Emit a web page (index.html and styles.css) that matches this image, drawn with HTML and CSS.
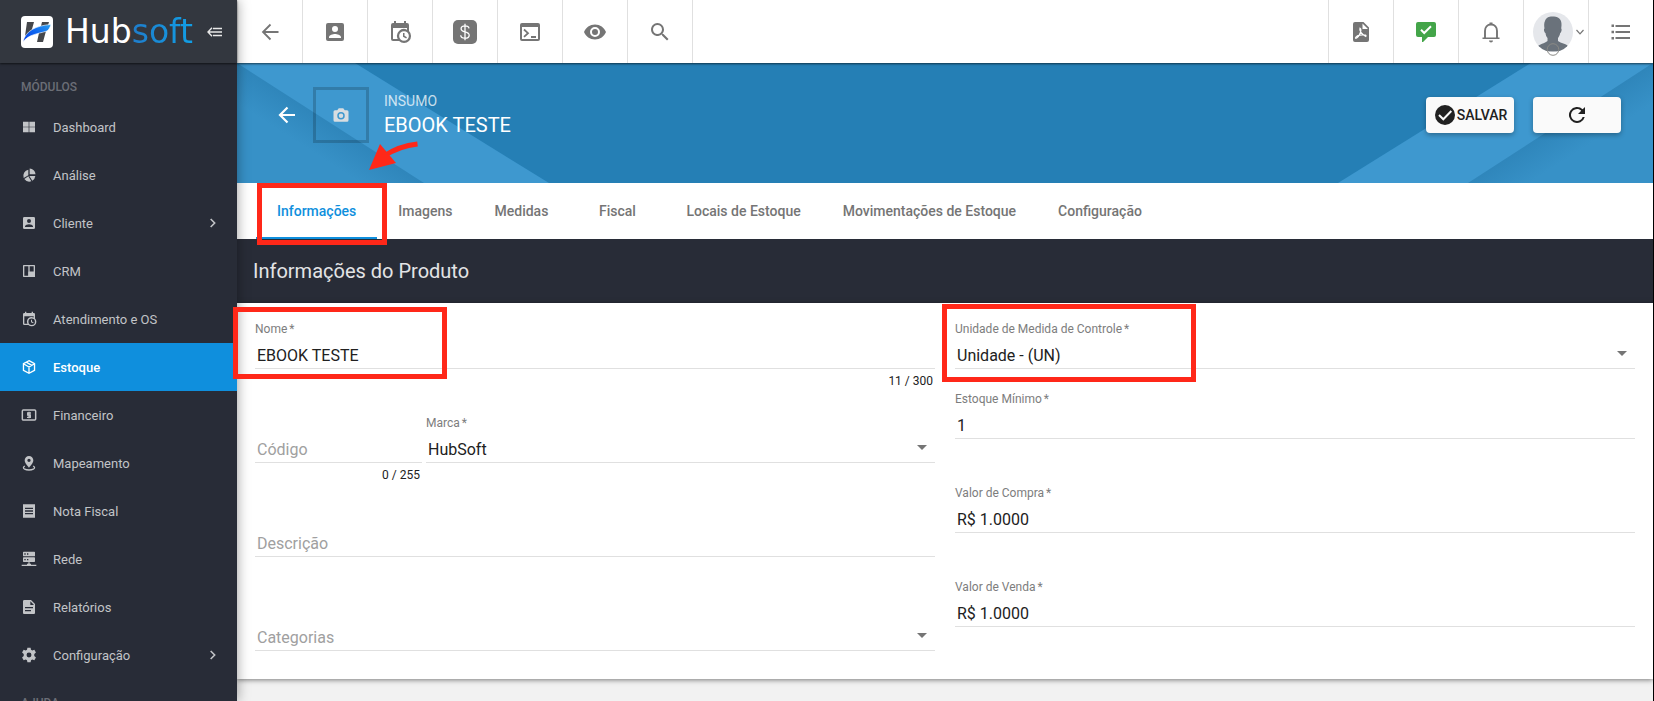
FILE: index.html
```html
<!DOCTYPE html>
<html lang="pt-BR">
<head>
<meta charset="utf-8">
<meta name="viewport" content="width=device-width, initial-scale=1">
<title>Hubsoft - Insumo</title>
<link rel="stylesheet" href="styles.css">
</head>
<body>
<div class="shell">
  <aside class="sidebar">
    <div class="brand">
      <svg class="brand-mark" viewBox="0 0 32 32" aria-hidden="true">
        <defs><linearGradient id="swoosh" x1="0" y1="1" x2="1" y2="0"><stop offset="0" stop-color="#0a3fe0"/><stop offset=".5" stop-color="#0d63f0"/><stop offset="1" stop-color="#2aa0ee"/></linearGradient></defs>
        <rect width="32" height="32" rx="4" fill="#fff"/>
        <path d="M6 6h7l-2.500 9-6.500 5zM21 6h7l-1.500 5-7 1zM18 17l7-2-3 11h-6z" fill="#45474b"/>
        <path d="M2 26C4 15 15 9.500 30 8.500c-1 3-2 5-4 6.500C17 18 8 18 2 26z" fill="url(#swoosh)" stroke="#fff" stroke-width=".6"/>
      </svg>
      <span class="brand-name">Hub<span class="brand-soft">soft</span></span>
      <button class="fold" type="button" aria-label="Recolher menu">
        <svg viewBox="0 0 16 10" class="fold-icon"><path d="M5 .7 1 5l4 4.300M1 5h14M6 1.500h9M6 8.500h9" fill="none" stroke="currentColor" stroke-width="1.400"/></svg>
      </button>
    </div>
    <nav class="menu" aria-label="Módulos">
      <h2 class="menu-title">MÓDULOS</h2>
      <a class="menu-item" href="#"><svg class="mi" viewBox="0 0 24 24"><path d="M3 4h8.500v7.500H3zM12.500 4H21v7.500h-8.500zM3 12.500h8.500V20H3zM12.500 12.500H21V20h-8.500z"/></svg><span>Dashboard</span></a>
      <a class="menu-item" href="#"><svg class="mi" viewBox="0 0 24 24"><path d="M13 2.100A9.500 9.500 0 0 1 21.800 11L13 11zM11 4v8.200L4 16.500A9.500 9.500 0 0 1 11 4zM12.500 13.500l9 0a9.500 9.500 0 0 1-4.500 7zM11 14l4.500 7.500A9.500 9.500 0 0 1 5 18z"/></svg><span>Análise</span></a>
      <a class="menu-item" href="#"><svg class="mi" viewBox="0 0 24 24"><path d="M6 17c0-2 4-3.100 6-3.100s6 1.100 6 3.100v1H6M15 9a3 3 0 1 1-6 0 3 3 0 0 1 6 0M3 5v14a2 2 0 0 0 2 2h14a2 2 0 0 0 2-2V5a2 2 0 0 0-2-2H5a2 2 0 0 0-2 2Z" fill-rule="evenodd"/></svg><span>Cliente</span><svg class="chev" viewBox="0 0 24 24"><path d="M8.500 6l6 6-6 6" fill="none" stroke="currentColor" stroke-width="2.400"/></svg></a>
      <a class="menu-item" href="#"><svg class="mi" viewBox="0 0 24 24"><path d="M4 3h16a1 1 0 0 1 1 1v16a1 1 0 0 1-1 1H4a1 1 0 0 1-1-1V4a1 1 0 0 1 1-1zm1 2v14h6V5zm8 0v8h6V5z" fill-rule="evenodd"/><path d="M11 13h10v8H11z"/></svg><span>CRM</span></a>
      <a class="menu-item" href="#"><svg class="mi" viewBox="0 0 24 24"><path d="M15 13h1.500v2.820l2.440 1.410-.75 1.300L15 16.690V13m4-5H5v11h4.670A7 7 0 0 1 19 9.670V8M5 21a2 2 0 0 1-2-2V5a2 2 0 0 1 2-2h1V1h2v2h8V1h2v2h1a2 2 0 0 1 2 2v6.100A7 7 0 0 1 11.100 21H5m11-9.850a4.850 4.850 0 1 0 0 9.700 4.850 4.850 0 0 0 0-9.700Z"/></svg><span>Atendimento e OS</span></a>
      <a class="menu-item is-active" href="#" aria-current="page"><svg class="mi" viewBox="0 0 24 24"><path d="M12 2.500l8.300 4.600v9.800L12 21.500l-8.300-4.600V7.100zM3.700 7.100 12 12l8.300-4.900M12 12v9.500M7.800 4.800l8.400 4.800" fill="none" stroke="currentColor" stroke-width="2"/></svg><span>Estoque</span></a>
      <a class="menu-item" href="#"><svg class="mi" viewBox="0 0 24 24"><rect x="2" y="4.500" width="20" height="15" rx="1.500" fill="none" stroke="currentColor" stroke-width="2.200"/><path d="M15 9h-5v3h4v3.500H9M12 7v10" fill="none" stroke="currentColor" stroke-width="1.900"/></svg><span>Financeiro</span></a>
      <a class="menu-item" href="#"><svg class="mi" viewBox="0 0 24 24"><path d="M12 1.500a6.500 6.500 0 0 1 6.500 6.500c0 4.500-6.500 11-6.500 11S5.500 12.500 5.500 8A6.500 6.500 0 0 1 12 1.500m0 4a2.500 2.500 0 1 0 0 5 2.500 2.500 0 0 0 0-5z" fill-rule="evenodd"/><path d="M5.800 16.500C3 18 3 20 5.500 21.200c3 1.700 10 1.700 13 0C21 20 21 18 18.200 16.500" fill="none" stroke="currentColor" stroke-width="2"/></svg><span>Mapeamento</span></a>
      <a class="menu-item" href="#"><svg class="mi" viewBox="0 0 24 24"><path d="M3 2h18v20H3zm3 5v2h12V7zm0 4v2h12v-2zm0 4v2h12v-2z" fill-rule="evenodd"/></svg><span>Nota Fiscal</span></a>
      <a class="menu-item" href="#"><svg class="mi" viewBox="0 0 24 24"><path d="M4 1h16a1 1 0 0 1 1 1v5a1 1 0 0 1-1 1H4a1 1 0 0 1-1-1V2a1 1 0 0 1 1-1m1 2.500v2h2v-2zm4 0v2h2v-2zM4 9.500h16a1 1 0 0 1 1 1v5a1 1 0 0 1-1 1H4a1 1 0 0 1-1-1v-5a1 1 0 0 1 1-1M5 12v2h2v-2zm4 0v2h2v-2zM11 17h2v2h2v1.500h8v2H1v-2h8V19h2z" fill-rule="evenodd"/></svg><span>Rede</span></a>
      <a class="menu-item" href="#"><svg class="mi" viewBox="0 0 24 24"><path d="M5 1.500h10l6 6V21a1.500 1.500 0 0 1-1.500 1.500h-15A1.500 1.500 0 0 1 3 21V3.500a2 2 0 0 1 2-2M14 3.500V9h5.500zM6 12v2h12v-2zm0 4.500v2h9v-2z" fill-rule="evenodd"/></svg><span>Relatórios</span></a>
      <a class="menu-item" href="#"><svg class="mi" viewBox="0 0 24 24"><path d="M9.600 1h4.800l.6 3.200 1.900 1.100 3.100-1.100 2.400 4.200-2.500 2.100v2.900l2.500 2.200-2.400 4.200-3.100-1.100-1.900 1.100-.6 3.200H9.600L9 19.800l-1.900-1.100L4 19.800l-2.400-4.200 2.500-2.200v-2.900L1.600 8.400 4 4.200l3.100 1.100L9 4.200zM12 8.300a3.700 3.700 0 1 0 0 7.400 3.700 3.700 0 0 0 0-7.400z" fill-rule="evenodd"/></svg><span>Configuração</span><svg class="chev" viewBox="0 0 24 24"><path d="M8.500 6l6 6-6 6" fill="none" stroke="currentColor" stroke-width="2.400"/></svg></a>
      <h2 class="menu-title">AJUDA</h2>
    </nav>
  </aside>

  <main class="main">
    <header class="topbar">
      <div class="tools tools-start">
        <button class="tool" type="button" aria-label="Voltar"><svg class="ti" viewBox="0 0 24 24"><path d="M12.500 4.500 5 12l7.500 7.500M5 12h15.500" fill="none" stroke="currentColor" stroke-width="1.800"/></svg></button>
        <button class="tool" type="button" aria-label="Clientes"><svg class="ti" viewBox="0 0 24 24"><path d="M6 17c0-2 4-3.100 6-3.100s6 1.100 6 3.100v1H6M15 9a3 3 0 1 1-6 0 3 3 0 0 1 6 0M3 5v14a2 2 0 0 0 2 2h14a2 2 0 0 0 2-2V5a2 2 0 0 0-2-2H5a2 2 0 0 0-2 2Z" fill-rule="evenodd"/></svg></button>
        <button class="tool" type="button" aria-label="Agenda"><svg class="ti" viewBox="0 0 24 24"><path d="M15 13h1.500v2.820l2.440 1.410-.75 1.300L15 16.690V13m4-5H5v11h4.670A7 7 0 0 1 19 9.670V8M5 21a2 2 0 0 1-2-2V5a2 2 0 0 1 2-2h1V1h2v2h8V1h2v2h1a2 2 0 0 1 2 2v6.100A7 7 0 0 1 11.100 21H5m11-9.850a4.850 4.850 0 1 0 0 9.700 4.850 4.850 0 0 0 0-9.700Z"/></svg></button>
        <button class="tool" type="button" aria-label="Financeiro"><svg class="ti" viewBox="0 0 24 24"><rect width="24" height="24" rx="5"/><path d="M16 8.300C15.800 6.600 14.200 5.800 12 5.800c-2.300 0-3.900 1.100-3.900 2.900 0 4.300 8.100 2.100 8.100 6.500 0 1.900-1.800 3-4.200 3-2.500 0-4.200-1-4.300-2.900M12 3.800v16.400" fill="none" stroke="#fff" stroke-width="1.300"/></svg></button>
        <button class="tool" type="button" aria-label="Terminal"><svg class="ti" viewBox="0 0 24 24"><path d="M4 3h16a2 2 0 0 1 2 2v14a2 2 0 0 1-2 2H4a2 2 0 0 1-2-2V5a2 2 0 0 1 2-2m0 4v12h16V7z" fill-rule="evenodd"/><path d="M6 9.500l4 3.700-4 3.700M13 17h5" fill="none" stroke="currentColor" stroke-width="1.800"/></svg></button>
        <button class="tool" type="button" aria-label="Visualizar"><svg class="ti" viewBox="0 0 24 24"><path d="M12 9a3 3 0 1 0 0 6 3 3 0 0 0 0-6m0 8a5 5 0 1 1 0-10 5 5 0 0 1 0 10m0-12.500C7 4.500 2.730 7.610 1 12c1.730 4.390 6 7.500 11 7.500s9.270-3.110 11-7.500c-1.730-4.390-6-7.500-11-7.500Z" fill-rule="evenodd"/></svg></button>
        <button class="tool" type="button" aria-label="Buscar"><svg class="ti" viewBox="0 0 24 24"><path d="M9.500 3A6.500 6.500 0 0 1 16 9.500c0 1.610-.59 3.090-1.560 4.230l.27.270h.79l5 5-1.500 1.500-5-5v-.79l-.27-.27A6.500 6.500 0 1 1 9.500 3m0 2a4.500 4.500 0 1 0 0 9 4.500 4.500 0 0 0 0-9Z" fill-rule="evenodd"/></svg></button>
      </div>
      <div class="tools tools-end">
        <button class="tool" type="button" aria-label="PDF"><svg class="ti" viewBox="0 0 24 24"><path d="M6 2h8.500L20 7.500V20a2 2 0 0 1-2 2H6a2 2 0 0 1-2-2V4a2 2 0 0 1 2-2m7.500 1.500V9H19z" fill-rule="evenodd"/><path d="M11 8.200c-1 2.500 1.500 6 5.800 8.200.8-1.300-1-1.800-3.300-1.600-3.300.1-6.500 1.200-7 3.200.5 1 2.700-.8 4-3.500 1.200-2.300 2-5.200.5-6.300z" fill="none" stroke="#fff" stroke-width="1.200"/></svg></button>
        <button class="tool" type="button" aria-label="Mensagens"><svg class="ti ok" viewBox="0 0 24 24"><path d="M4 2h16a2 2 0 0 1 2 2v11a2 2 0 0 1-2 2h-6l-5 5H8v-5H4a2 2 0 0 1-2-2V4a2 2 0 0 1 2-2z"/><path d="M7 9.800l3.200 3.200L17 6.300" fill="none" stroke="#fff" stroke-width="2"/></svg></button>
        <button class="tool" type="button" aria-label="Notificações"><svg class="ti" viewBox="0 0 24 24"><path d="M6 18v-7c0-3.500 2.200-6.500 6-6.500s6 3 6 6.500v7" fill="none" stroke="currentColor" stroke-width="1.900"/><path d="M3.500 17.500h17v1.600h-17zM10.500 2.500h3v2.500h-3zM10 20.500h4a2 2 0 0 1-4 0"/></svg></button>
        <button class="tool profile" type="button" aria-label="Perfil">
          <svg class="avatar" viewBox="0 0 40 44"><defs><clipPath id="face"><circle cx="20" cy="20" r="20"/></clipPath></defs><circle cx="20" cy="20" r="20" fill="#e5e7eb"/><path clip-path="url(#face)" d="M12 9c1-4 5-5 9-4.500 5 .5 8 3 7.500 9l-.3 3c.8 0 .5 4-1 4.500-.4 2.500-1.500 4-2.200 5v3c3 2.500 8 2.500 10 5v6H4v-5c2-3 8-3.500 10.500-6v-3c-1-1-1.800-3-2-5-1.500-.5-2-4.500-1-4.500-.5-3-.5-5.500.5-7.500z" fill="#6a727b"/><path d="M14.500 39.500a6 6 0 0 0 11 0z" fill="#fff"/><circle cx="20" cy="37.500" r="5.800" fill="none" stroke="#8a8a86"/></svg>
          <svg class="caret" viewBox="0 0 10 10"><path d="M1.500 3 5 6.800 8.500 3" fill="none" stroke="currentColor" stroke-width="1.200"/></svg>
        </button>
        <button class="tool" type="button" aria-label="Lista"><svg class="ti" viewBox="0 0 24 24"><path d="M6.500 5H21v2H6.500zM6.500 11H21v2H6.500zM6.500 17H21v2H6.500zM2.500 4.500h2.500V7H2.500zM2.500 10.700h2.500v2.500H2.500zM2.500 17h2.500v2.500H2.500z"/></svg></button>
      </div>
    </header>

    <section class="banner">
      <svg class="stripes stripes-left" viewBox="0 0 320 120" aria-hidden="true">
        <defs><linearGradient id="fold-a" gradientUnits="userSpaceOnUse" x1="92" y1="60" x2="74" y2="88"><stop offset="0" stop-color="#2f86bb"/><stop offset="1" stop-color="#3791c7"/></linearGradient></defs>
        <path d="M0 0h118l194 120H0z" fill="#3e98cf"/><path d="M0 0l187 120H0z" fill="url(#fold-a)"/>
      </svg>
      <svg class="stripes stripes-right" viewBox="0 0 320 120" aria-hidden="true">
        <defs><linearGradient id="fold-b" gradientUnits="userSpaceOnUse" x1="228" y1="60" x2="246" y2="88"><stop offset="0" stop-color="#2f86bb"/><stop offset="1" stop-color="#3791c7"/></linearGradient></defs>
        <path d="M320 0H198L5 120h315z" fill="#3e98cf"/><path d="M320 0L135 120h185z" fill="url(#fold-b)"/>
      </svg>
      <div class="heading">
        <button class="back" type="button" aria-label="Voltar"><svg class="ti" viewBox="0 0 24 24"><path d="M12.500 4.500 5 12l7.500 7.500M5 12h15" fill="none" stroke="currentColor" stroke-width="2.200"/></svg></button>
        <div class="photo"><svg class="camera" viewBox="0 0 24 24"><path d="M9 3h6l2 2.500h3a2 2 0 0 1 2 2V19a2 2 0 0 1-2 2H4a2 2 0 0 1-2-2V7.500a2 2 0 0 1 2-2h3zM12 8a5 5 0 1 0 0 10 5 5 0 0 0 0-10m0 2a3 3 0 1 1 0 6 3 3 0 0 1 0-6z" fill-rule="evenodd"/></svg></div>
        <div class="titles"><span class="kind">INSUMO</span><h1 class="name">EBOOK TESTE</h1></div>
      </div>
      <div class="actions">
        <button class="action" type="button"><svg class="ti" viewBox="0 0 24 24"><circle cx="12" cy="12" r="10"/><path d="M6 12l4.300 4.300L18.300 8" fill="none" stroke="#fafafa" stroke-width="2"/></svg><span>SALVAR</span></button>
        <button class="action" type="button" aria-label="Atualizar"><svg class="ti" viewBox="0 0 24 24"><path d="M17.650 6.350A8 8 0 1 0 19.730 14h-2.080A6 6 0 1 1 12 6c1.660 0 3.140.69 4.220 1.780L13 11h7V4l-2.350 2.350Z"/></svg></button>
      </div>
    </section>

    <nav class="tabs" aria-label="Seções">
      <a class="tab is-current" href="#">Informações
        <span class="mark mark-tab"></span>
        <svg class="pointer" viewBox="0 0 50 30" aria-hidden="true"><path d="M48.500 3Q30 5 15 15" fill="none" stroke="#ff2819" stroke-width="5"/><path d="M0 29 11 3l16 19z" fill="#ff2819"/></svg>
      </a>
      <a class="tab" href="#">Imagens</a>
      <a class="tab" href="#">Medidas</a>
      <a class="tab" href="#">Fiscal</a>
      <a class="tab" href="#">Locais de Estoque</a>
      <a class="tab" href="#">Movimentações de Estoque</a>
      <a class="tab" href="#">Configuração</a>
    </nav>

    <h2 class="section-title">Informações do Produto</h2>

    <form class="card">
      <div class="column">
        <div class="field roomy">
          <label class="label" for="nome">Nome<span class="req">*</span></label>
          <input class="control" id="nome" type="text" value="EBOOK TESTE">
          <span class="counter">11 / 300</span>
          <span class="mark mark-name"></span>
        </div>
        <div class="pair roomy">
          <div class="field">
            <span class="label"></span>
            <input class="control" type="text" placeholder="Código" aria-label="Código">
            <span class="counter">0 / 255</span>
          </div>
          <div class="field">
            <label class="label" for="marca">Marca<span class="req">*</span></label>
            <div class="drop"><select class="control" id="marca"><option>HubSoft</option></select></div>
          </div>
        </div>
        <div class="field roomy">
          <span class="label"></span>
          <input class="control" type="text" placeholder="Descrição" aria-label="Descrição">
        </div>
        <div class="field">
          <span class="label"></span>
          <div class="drop"><select class="control is-empty" aria-label="Categorias"><option>Categorias</option></select></div>
        </div>
      </div>
      <div class="column">
        <div class="field">
          <label class="label" for="unidade">Unidade de Medida de Controle<span class="req">*</span></label>
          <div class="drop"><select class="control" id="unidade"><option>Unidade - (UN)</option></select></div>
          <span class="mark mark-unit"></span>
        </div>
        <div class="field roomy">
          <label class="label" for="minimo">Estoque Mínimo<span class="req">*</span></label>
          <input class="control" id="minimo" type="text" value="1">
        </div>
        <div class="field roomy">
          <label class="label" for="compra">Valor de Compra<span class="req">*</span></label>
          <input class="control" id="compra" type="text" value="R$ 1.0000">
        </div>
        <div class="field">
          <label class="label" for="venda">Valor de Venda<span class="req">*</span></label>
          <input class="control" id="venda" type="text" value="R$ 1.0000">
        </div>
      </div>
    </form>
  </main>
</div>
</body>
</html>
```
FILE: styles.css
```css
* { box-sizing: border-box; }

body {
  margin: 0;
  font-family: Roboto, "Liberation Sans", sans-serif;
  font-size: 14px;
  color: #212121;
  background: #f2f2f2;
}

button { font: inherit; border: 0; padding: 0; background: none; cursor: pointer; }
a { color: inherit; text-decoration: none; }
svg { display: block; fill: currentColor; flex: none; }

.shell { display: flex; height: 100vh; }

/* Sidebar */
.sidebar {
  position: relative;
  z-index: 2;
  flex: 0 0 237px;
  display: flex;
  flex-direction: column;
  background: #282c37;
  color: #c2c4c7;
  box-shadow: 0 0 12px rgba(0, 0, 0, .4);
}
.brand {
  position: relative;
  z-index: 1;
  flex: none;
  display: flex;
  align-items: center;
  height: 63px;
  padding: 0 14px 0 21px;
  background: #33373f;
  box-shadow: 0 1px 2px rgba(0, 0, 0, .6);
}
.brand-mark { width: 32px; height: 32px; }
.brand-name {
  flex: 1;
  margin-left: 12px;
  font: 33px/32px "DejaVu Sans", sans-serif;
  color: #fff;
}
.brand-soft {
  background: linear-gradient(90deg, #1f7dcc, #119fe6);
  background-clip: text;
  color: transparent;
}
.fold { color: #e8e8e8; }
.fold-icon { width: 16px; height: 10px; }

.menu { flex: 1; min-height: 0; overflow-y: auto; scrollbar-width: none; }
.menu-title {
  margin: 0;
  padding: 16px 21px 8px;
  font-size: 12px;
  line-height: 16px;
  font-weight: 500;
  color: #6b6e76;
}
.menu-item {
  display: flex;
  align-items: center;
  gap: 16px;
  height: 48px;
  padding: 0 16px 0 21px;
  font-size: 13px;
}
.menu-item.is-active { background: #0f8fdd; color: #fff; font-weight: 500; }
.mi { width: 16px; height: 16px; }
.chev { width: 16px; height: 16px; margin-left: auto; }

/* Top bar */
.main { flex: 1; min-width: 0; border-right: 1px solid #000; }
.topbar {
  position: relative;
  z-index: 1;
  display: flex;
  justify-content: space-between;
  height: 63px;
  background: #fff;
  box-shadow: 0 1px 2px rgba(0, 0, 0, .6);
}
.tools { display: flex; color: #757575; }
.tools-start { padding-left: 1px; }
.tool {
  display: flex;
  align-items: center;
  justify-content: center;
  width: 65px;
  color: inherit;
  border-right: 1px solid #e0e0e0;
}
.tools-end .tool { border-right: 0; border-left: 1px solid #e0e0e0; }
.ti { width: 24px; height: 24px; }
.ok { color: #43a549; }
.profile { justify-content: flex-end; padding-right: 3px; }
.avatar { width: 40px; height: 44px; margin-top: 4px; }
.caret { width: 10px; height: 10px; margin-left: 2px; }

/* Banner */
.banner {
  position: relative;
  display: flex;
  align-items: center;
  justify-content: space-between;
  height: 120px;
  padding: 0 32px 16px 38px;
  background: #257fb5;
  color: #fff;
}
.stripes { position: absolute; top: 0; width: 320px; height: 120px; }
.stripes-left { left: 0; }
.stripes-right { right: 0; }
.heading, .actions { position: relative; display: flex; align-items: center; }
.back { color: #fff; }
.photo {
  display: grid;
  place-items: center;
  width: 56px;
  height: 56px;
  margin: 0 15px 0 14px;
  border: 3px solid rgba(0, 0, 0, .18);
}
.camera { width: 18px; height: 18px; color: #d8dde1; }
.titles { display: flex; flex-direction: column; }
.kind { font-size: 14px; line-height: 20px; color: rgba(255, 255, 255, .75); }
.name { margin: 0; font-size: 20px; line-height: 28px; font-weight: 400; }
.actions { gap: 19px; }
.action {
  display: flex;
  align-items: center;
  justify-content: center;
  width: 88px;
  height: 36px;
  border-radius: 4px;
  background: #fafafa;
  color: #212121;
  font-weight: 500;
  box-shadow: 0 2px 5px rgba(0, 0, 0, .3);
}

/* Tabs */
.tabs {
  display: flex;
  height: 56px;
  padding: 0 19px;
  background: #fff;
  color: #757575;
  font-weight: 500;
}
.tab {
  position: relative;
  display: flex;
  align-items: center;
  justify-content: center;
  min-width: 96px;
  padding: 0 21px;
  white-space: nowrap;
}
.tab.is-current { color: #0f8fdd; box-shadow: inset 0 -2px #0f8fdd; }

.section-title {
  margin: 0;
  padding: 0 16px;
  font-size: 20px;
  line-height: 64px;
  font-weight: 400;
  color: #e3e4e6;
  background: #282c37;
}

/* Form */
.card {
  display: grid;
  grid-template-columns: 1fr 1fr;
  gap: 20px;
  padding: 18px 18px 6px;
  background: #fff;
  box-shadow: 0 1px 5px rgba(0, 0, 0, .5);
}
.field { position: relative; min-height: 70px; }
.roomy { margin-bottom: 24px; }
.pair { display: grid; grid-template-columns: 167fr 509fr; gap: 4px; }
.label {
  display: block;
  height: 18px;
  font-size: 12px;
  line-height: 16px;
  color: #7d7d7d;
}
.req { margin-left: 2px; }
.control {
  display: block;
  width: 100%;
  height: 30px;
  margin: 0;
  padding: 4px 2px 0;
  border: 0;
  border-bottom: 1px solid #e0e0e0;
  border-radius: 0;
  outline: 0;
  appearance: none;
  background: none;
  font: 16px/24px Roboto, "Liberation Sans", sans-serif;
  color: #212121;
}
.control::placeholder, .is-empty { color: #a0a0a0; opacity: 1; }
.drop { position: relative; }
.drop::after {
  content: "";
  position: absolute;
  top: 12px;
  right: 8px;
  border: 5px solid transparent;
  border-top-color: #757575;
  border-bottom: 0;
  pointer-events: none;
}
.counter {
  display: block;
  padding: 4px 2px 0 0;
  font-size: 12px;
  line-height: 16px;
  text-align: right;
}

/* Highlights drawn over the page */
.mark { position: absolute; z-index: 5; border: 5px solid #ff2819; pointer-events: none; }
.mark-tab { inset: 0 -10px -6px 1px; }
.mark-name { top: -14px; left: -22px; width: 214px; height: 72px; }
.mark-unit { top: -17px; left: -13px; width: 254px; height: 78px; }
.pointer { position: absolute; z-index: 5; top: -42px; left: 113px; width: 50px; height: 30px; }
```
